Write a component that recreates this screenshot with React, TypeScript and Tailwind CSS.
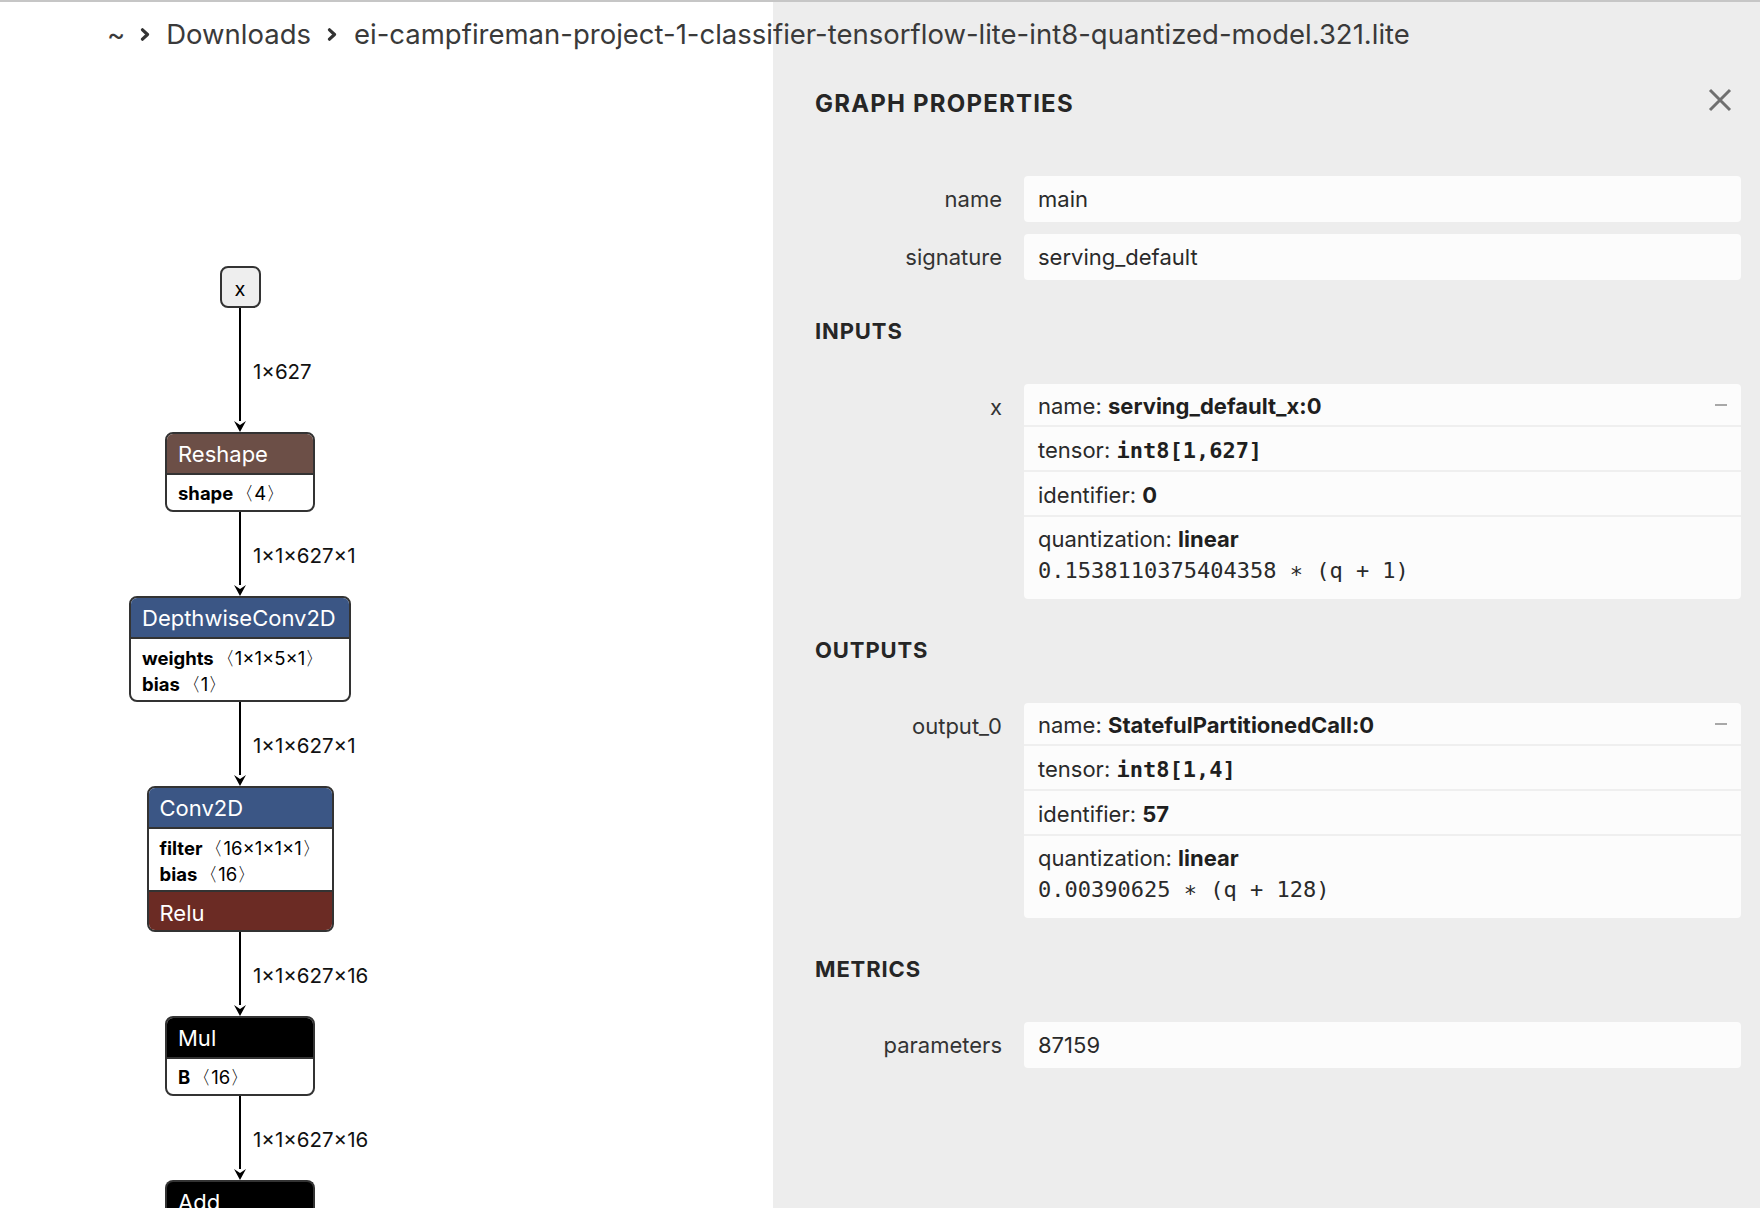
import React from 'react';

const SANS = "Inter, 'Noto Sans', 'Liberation Sans', sans-serif";
const MONO = "'DejaVu Sans Mono', 'Liberation Mono', monospace";

type Attr = { name: string; value: string };

type GraphNode = {
  title: string;
  header: string;
  width: string;
  attrs?: Attr[];
  activation?: string;
};

const nodes: GraphNode[] = [
  {
    title: 'Reshape',
    header: 'bg-[#6c4f47]',
    width: 'w-[150px]',
    attrs: [{ name: 'shape', value: '〈4〉' }],
  },
  {
    title: 'DepthwiseConv2D',
    header: 'bg-[#3b5685]',
    width: 'w-[222px]',
    attrs: [
      { name: 'weights', value: '〈1×1×5×1〉' },
      { name: 'bias', value: '〈1〉' },
    ],
  },
  {
    title: 'Conv2D',
    header: 'bg-[#3b5685]',
    width: 'w-[187px]',
    attrs: [
      { name: 'filter', value: '〈16×1×1×1〉' },
      { name: 'bias', value: '〈16〉' },
    ],
    activation: 'Relu',
  },
  {
    title: 'Mul',
    header: 'bg-black',
    width: 'w-[150px]',
    attrs: [{ name: 'B', value: '〈16〉' }],
  },
];

const edges = [
  { label: '1×627', height: 'h-[124px]' },
  { label: '1×1×627×1', height: 'h-[84px]' },
  { label: '1×1×627×1', height: 'h-[84px]' },
  { label: '1×1×627×16', height: 'h-[84px]' },
  { label: '1×1×627×16', height: 'h-[84px]' },
];

function Edge({ label, height }: { label: string; height: string }) {
  return (
    <div className={`relative flex w-[12px] flex-col items-center ${height}`}>
      <div className="w-[2px] flex-1 bg-black" />
      <svg width="12" height="11" viewBox="0 0 12 11" className="shrink-0">
        <path d="M0 0 L6 11 L12 0 L6 4 Z" fill="#000" />
      </svg>
      <span className="absolute left-[19px] top-[calc(50%+2px)] -translate-y-1/2 whitespace-nowrap text-[20.5px] leading-[26px] text-[#111]">
        {label}
      </span>
    </div>
  );
}

function Node({ node }: { node: GraphNode }) {
  return (
    <div className={`${node.width} overflow-hidden rounded-[8px] border-2 border-[#333] bg-white`}>
      <div className={`${node.header} h-[39px] px-[11px] pt-[1px] text-[22px] leading-[39px] text-white`}>
        {node.title}
      </div>
      {node.attrs && (
        <div
          className={`border-t-2 border-[#333] px-[11px] text-[18.5px] leading-[26px] text-black ${
            node.attrs.length > 1 ? 'pt-[6px] pb-[3px]' : 'pt-[5px] pb-[4px]'
          }`}
        >
          {node.attrs.map((a) => (
            <div key={a.name} className="whitespace-nowrap">
              <span className="font-bold">{a.name}</span>
              <span className="ml-[2px]">{a.value}</span>
            </div>
          ))}
        </div>
      )}
      {node.activation && (
        <div className="h-[40px] border-t-2 border-[#333] bg-[#6b2b24] px-[11px] pt-[3px] text-[22px] leading-[37px] text-white">
          {node.activation}
        </div>
      )}
    </div>
  );
}

function Graph() {
  return (
    <div className="flex w-[480px] flex-col items-center pt-[264px]">
      <div className="flex h-[42px] w-[41px] items-center justify-center rounded-[8px] border-2 border-[#333] bg-[#eee] pt-[3px] text-[20px] text-black">
        x
      </div>
      {nodes.map((n, i) => (
        <React.Fragment key={n.title}>
          <Edge {...edges[i]} />
          <Node node={n} />
        </React.Fragment>
      ))}
      <Edge {...edges[4]} />
      <div className="w-[150px] overflow-hidden rounded-t-[8px] border-2 border-b-0 border-[#333] bg-black">
        <div className="h-[39px] px-[11px] pt-[1px] text-[22px] leading-[39px] text-white">Add</div>
      </div>
    </div>
  );
}

function Chevron() {
  return (
    <svg width="11" height="13" viewBox="0 0 11 13" className="shrink-0">
      <path d="M2.5 1.8 L7.5 6.5 L2.5 11.2" fill="none" stroke="#333" strokeWidth="3.2" strokeLinecap="round" strokeLinejoin="round" />
    </svg>
  );
}

function Breadcrumb() {
  return (
    <div className="absolute left-[107px] top-[14px] flex h-[36px] items-center text-[27.5px] leading-[36px] text-[#3a3a3a]">
      <span>~</span>
      <span className="mx-[15px] flex items-center">
        <Chevron />
      </span>
      <span>Downloads</span>
      <span className="mx-[16px] flex items-center">
        <Chevron />
      </span>
      <span>ei-campfireman-project-1-classifier-tensorflow-lite-int8-quantized-model.321.lite</span>
    </div>
  );
}

function SectionTitle({ children }: { children: React.ReactNode }) {
  return (
    <div className="mt-[36px] mb-[38px] h-[30px] text-[22px] font-bold leading-[30px] tracking-[0.04em] text-[#262626]">
      {children}
    </div>
  );
}

function Label({ children, lh }: { children: React.ReactNode; lh: string }) {
  return <div className={`w-[187px] shrink-0 text-right text-[22px] text-[#333] ${lh}`}>{children}</div>;
}

function ValueRow({ label, value }: { label: string; value: string }) {
  return (
    <div className="flex gap-[22px]">
      <Label lh="leading-[46px]">{label}</Label>
      <div className="h-[46px] flex-1 rounded-[4px] bg-[#fcfcfc] px-[14px] text-[22px] leading-[46px] text-[#2a2a2a]">
        {value}
      </div>
    </div>
  );
}

type TensorInfo = {
  name: string;
  tensor: string;
  identifier: string;
  formula: string;
};

function TensorRow({ label, info }: { label: string; info: TensorInfo }) {
  return (
    <div className="flex gap-[22px]">
      <Label lh="leading-[43px] pt-[2px]">{label}</Label>
      <div className="flex-1 overflow-hidden rounded-[4px] bg-[#fcfcfc] text-[22px] text-[#2a2a2a] divide-y-2 divide-[#efefef]">
        <div className="flex h-[43px] items-center justify-between pl-[14px] pr-[14px] pt-[3px]">
          <span>
            name: <span className="font-bold text-[#1f1f1f]">{info.name}</span>
          </span>
          <span className="mb-[3px] h-[2px] w-[12px] bg-[#a8a8a8]" />
        </div>
        <div className="flex h-[45px] items-center px-[14px] pt-[3px]">
          <span>
            tensor:{' '}
            <span className="font-bold text-[#1f1f1f]" style={{ fontFamily: MONO }}>
              {info.tensor}
            </span>
          </span>
        </div>
        <div className="flex h-[45px] items-center px-[14px] pt-[3px]">
          <span>
            identifier: <span className="font-bold text-[#1f1f1f]">{info.identifier}</span>
          </span>
        </div>
        <div className="px-[14px] pt-[6px] pb-[12px] leading-[32px]">
          <div>
            quantization: <span className="font-bold text-[#1f1f1f]">linear</span>
          </div>
          <div className="whitespace-pre" style={{ fontFamily: MONO }}>
            {info.formula}
          </div>
        </div>
      </div>
    </div>
  );
}

function Sidebar() {
  return (
    <aside className="flex-1 bg-[#ededed] pl-[42px] pr-[19px] pt-[87px]">
      <div className="flex h-[30px] items-center justify-between">
        <div className="text-[24px] font-bold leading-[30px] tracking-[0.05em] text-[#262626]">GRAPH PROPERTIES</div>
        <svg width="24" height="24" viewBox="0 0 24 24" className="mr-[9px] mb-[8px]">
          <path d="M2 2 L22 22 M22 2 L2 22" stroke="#6f6f6f" strokeWidth="3" strokeLinecap="butt" />
        </svg>
      </div>
      <div className="mt-[57px] flex flex-col gap-[12px]">
        <ValueRow label="name" value="main" />
        <ValueRow label="signature" value="serving_default" />
      </div>
      <SectionTitle>INPUTS</SectionTitle>
      <TensorRow
        label="x"
        info={{
          name: 'serving_default_x:0',
          tensor: 'int8[1,627]',
          identifier: '0',
          formula: '0.1538110375404358 ∗ (q + 1)',
        }}
      />
      <SectionTitle>OUTPUTS</SectionTitle>
      <TensorRow
        label="output_0"
        info={{
          name: 'StatefulPartitionedCall:0',
          tensor: 'int8[1,4]',
          identifier: '57',
          formula: '0.00390625 ∗ (q + 128)',
        }}
      />
      <SectionTitle>METRICS</SectionTitle>
      <ValueRow label="parameters" value="87159" />
    </aside>
  );
}

export default function App() {
  return (
    <div
      className="relative flex h-[1208px] w-[1760px] overflow-hidden border-t-2 border-[#c6c6c6] bg-white"
      style={{ fontFamily: SANS }}
    >
      <div className="w-[773px] shrink-0 bg-white">
        <Graph />
      </div>
      <Sidebar />
      <Breadcrumb />
    </div>
  );
}
